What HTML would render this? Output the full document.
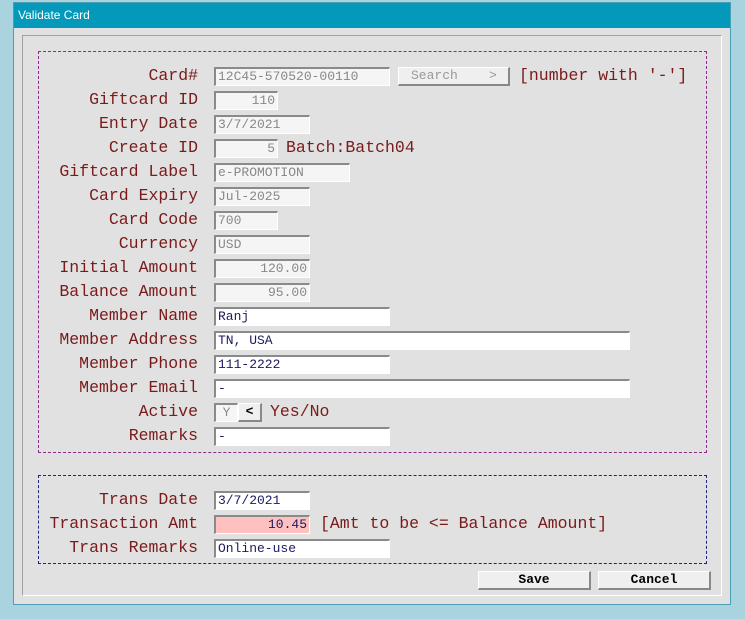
<!DOCTYPE html>
<html><head><style>
*{margin:0;padding:0;box-sizing:border-box}
body{width:745px;height:619px;background:#a9d3df;position:relative;overflow:hidden;font-family:"Liberation Mono",monospace}
#win{position:absolute;left:13px;top:2px;width:718px;height:603px;background:#e1e1e1;border:1px solid #4a9fb5}
#title{position:absolute;left:0;top:0;width:716px;height:25px;background:#0499ba;color:#fff;font-family:"Liberation Sans",sans-serif;font-size:12px;line-height:25px;padding-left:4px}
#panel{position:absolute;left:22px;top:35px;width:700px;height:561px;border:1px solid #a0a0a0;border-right-color:#fff;border-bottom-color:#fff}
.box{position:absolute;border:1px dashed}
.l{position:absolute;right:547px;font-size:16.5px;color:#7a1a1a;white-space:nowrap;line-height:18px}
.t{position:absolute;font-size:16.5px;color:#7a1a1a;white-space:nowrap;line-height:18px}
.i{position:absolute;height:19px;background:#f5f5f5;border:2px solid #8a8a8a;border-right:1px solid #fff;border-bottom:1px solid #fff;font-size:13px;color:#888;line-height:15px;padding-left:2px;white-space:nowrap;overflow:hidden}
.w{background:#fff;color:#1a1a60}
.r{text-align:right;padding-right:2px}
.b{position:absolute;height:19px;background:#efefef;border:1px solid #fff;border-right:2px solid #888;border-bottom:2px solid #888;font-size:13px;line-height:16px;text-align:center}
</style></head><body>
<div id="win"><div id="title">Validate Card</div></div>
<div id="panel"></div>
<div class="box" style="left:38px;top:51px;width:669px;height:402px;border-color:#8a2a8a"></div>
<div class="box" style="left:38px;top:475px;width:669px;height:89px;border-color:#202080"></div>

<div class="l" style="top:67px">Card#</div><div class="i" style="left:214px;top:67px;width:176px">12C45-570520-00110</div>
<div class="b" style="left:398px;top:67px;width:112px;color:#999;text-align:left;padding-left:12px">Search &nbsp;&nbsp;&nbsp;&gt;</div>
<div class="t" style="left:519px;top:67px">[number with '-']</div>
<div class="l" style="top:91px">Giftcard ID</div><div class="i r" style="left:214px;top:91px;width:64px">110</div>
<div class="l" style="top:115px">Entry Date</div><div class="i" style="left:214px;top:115px;width:96px">3/7/2021</div>
<div class="l" style="top:139px">Create ID</div><div class="i r" style="left:214px;top:139px;width:64px">5</div>
<div class="t" style="left:286px;top:139px">Batch:Batch04</div>
<div class="l" style="top:163px">Giftcard Label</div><div class="i" style="left:214px;top:163px;width:136px">e-PROMOTION</div>
<div class="l" style="top:187px">Card Expiry</div><div class="i" style="left:214px;top:187px;width:96px">Jul-2025</div>
<div class="l" style="top:211px">Card Code</div><div class="i" style="left:214px;top:211px;width:64px">700</div>
<div class="l" style="top:235px">Currency</div><div class="i" style="left:214px;top:235px;width:96px">USD</div>
<div class="l" style="top:259px">Initial Amount</div><div class="i r" style="left:214px;top:259px;width:96px">120.00</div>
<div class="l" style="top:283px">Balance Amount</div><div class="i r" style="left:214px;top:283px;width:96px">95.00</div>
<div class="l" style="top:307px">Member Name</div><div class="i w" style="left:214px;top:307px;width:176px">Ranj</div>
<div class="l" style="top:331px">Member Address</div><div class="i w" style="left:214px;top:331px;width:416px">TN, USA</div>
<div class="l" style="top:355px">Member Phone</div><div class="i w" style="left:214px;top:355px;width:176px">111-2222</div>
<div class="l" style="top:379px">Member Email</div><div class="i w" style="left:214px;top:379px;width:416px">-</div>
<div class="l" style="top:403px">Active</div><div class="i" style="left:214px;top:403px;width:24px;text-align:center;padding:0">Y</div>
<div class="b" style="left:238px;top:403px;width:24px;font-weight:bold;color:#000">&lt;</div>
<div class="t" style="left:270px;top:403px">Yes/No</div>
<div class="l" style="top:427px">Remarks</div><div class="i w" style="left:214px;top:427px;width:176px">-</div>

<div class="l" style="top:491px">Trans Date</div><div class="i w" style="left:214px;top:491px;width:96px">3/7/2021</div>
<div class="l" style="top:515px">Transaction Amt</div><div class="i w r" style="left:214px;top:515px;width:96px;background:#ffc0c0">10.45</div>
<div class="t" style="left:320px;top:515px">[Amt to be &lt;= Balance Amount]</div>
<div class="l" style="top:539px">Trans Remarks</div><div class="i w" style="left:214px;top:539px;width:176px">Online-use</div>

<div class="b" style="left:478px;top:571px;width:113px;font-weight:bold">Save</div>
<div class="b" style="left:598px;top:571px;width:113px;font-weight:bold">Cancel</div>
</body></html>
